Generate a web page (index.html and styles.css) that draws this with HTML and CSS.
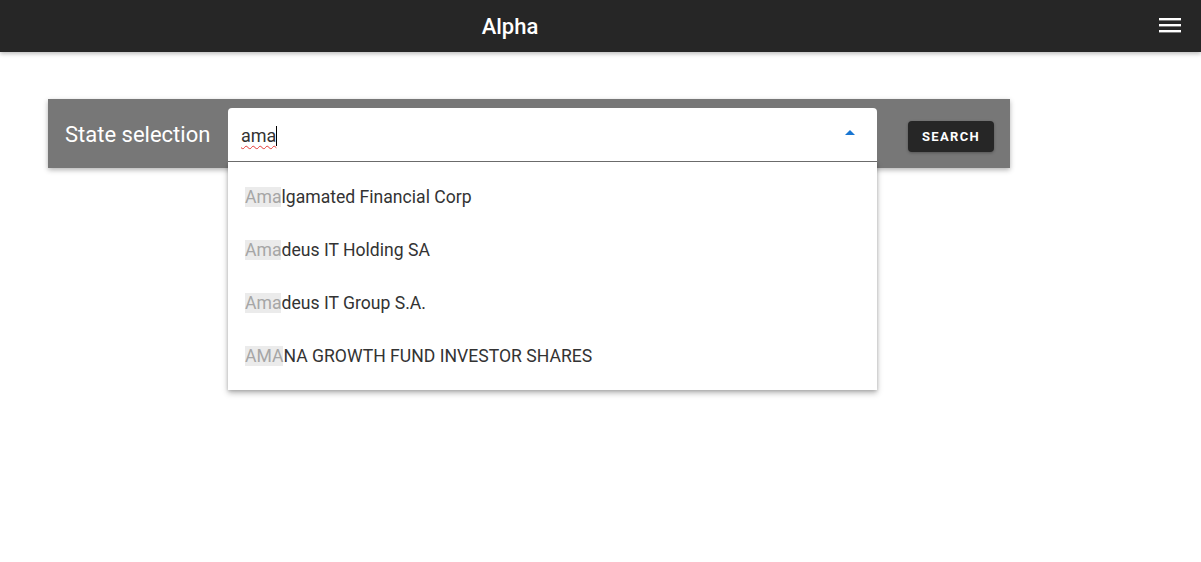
FILE: index.html
```html
<!DOCTYPE html>
<html>
<head>
<meta charset="utf-8">
<link rel="stylesheet" href="styles.css">
</head>
<body>
<header class="topbar">
  <div class="title">Alpha</div>
  <div class="menu">
    <svg width="22" height="16" viewBox="0 0 22 16"><rect x="0" y="1" width="22" height="2.4" fill="#fff"/><rect x="0" y="7" width="22" height="2.4" fill="#fff"/><rect x="0" y="13" width="22" height="2.4" fill="#fff"/></svg>
  </div>
</header>
<main class="content">
  <section class="panel">
    <div class="label">State selection</div>
    <div class="combo">
      <div class="input">
        <span class="typed">ama</span><span class="caret"></span>
        <span class="arrow"></span>
      </div>
      <ul class="list">
        <li><span class="hl">Ama</span>lgamated Financial Corp</li>
        <li><span class="hl">Ama</span>deus IT Holding SA</li>
        <li><span class="hl">Ama</span>deus IT Group S.A.</li>
        <li><span class="hl">AMA</span>NA GROWTH FUND INVESTOR SHARES</li>
      </ul>
    </div>
    <button class="search">SEARCH</button>
  </section>
</main>
</body>
</html>
```
FILE: styles.css
```css
* { box-sizing: border-box; }
html, body { margin: 0; padding: 0; background: #fff; font-family: Roboto, "Liberation Sans", sans-serif; min-height: 100%; }
body { height: 562px; }
.topbar {
  height: 52px;
  background: #262626;
  display: flex;
  align-items: center;
  box-shadow: 0 2px 4px rgba(0,0,0,0.25);
  position: relative;
  z-index: 2;
}
.title {
  width: 1020px;
  text-align: center;
  color: #fff;
  font-size: 22px;
  font-weight: 500;
}
.menu {
  margin-left: 139px;
  display: flex;
  align-items: center;
  height: 16px;
  margin-top: -2px;
}
.content { padding: 47px 0 0 48px; }
.panel {
  width: 962px;
  height: 69px;
  background: #777;
  display: flex;
  align-items: flex-start;
  box-shadow: 0 2px 5px rgba(0,0,0,0.3);
}
.label {
  color: #fff;
  font-size: 22px;
  padding: 23px 0 0 17px;
  width: 180px;
}
.combo {
  margin-top: 9px;
  width: 649px;
  flex: none;
}
.input {
  height: 54px;
  background: #fff;
  border-radius: 4px 4px 0 0;
  border-bottom: 1px solid #6b6b6b;
  display: flex;
  align-items: center;
  padding: 0 0 0 13px;
  position: relative;
  font-size: 18px;
  color: #333;
}
.typed {
  text-decoration: underline wavy #e53935;
  text-decoration-thickness: 1px;
  text-underline-offset: 3px;
  margin-top: 1px;
}
.caret {
  display: inline-block;
  width: 1px;
  height: 20px;
  background: #000;
  margin-top: 2px;
}
.arrow {
  position: absolute;
  left: 617px;
  top: 22px;
  width: 0; height: 0;
  border-left: 5px solid transparent;
  border-right: 5px solid transparent;
  border-bottom: 5px solid #1976d2;
}
.list {
  width: 649px;
  margin: 0;
  padding: 8px 0;
  list-style: none;
  background: #fff;
  box-shadow: 0 3px 6px rgba(0,0,0,0.28), 0 1px 3px rgba(0,0,0,0.15);
}
.list li {
  height: 53px;
  display: flex;
  align-items: center;
  padding-left: 17px;
  font-size: 17.6px;
  color: #333;
}
.hl {
  background: #ebebeb;
  color: #a6a6a6;
}
.search {
  margin: 22px 0 0 31px;
  width: 86px;
  height: 31px;
  border: none;
  border-radius: 4px;
  background: #262626;
  color: #fff;
  font-family: Roboto, "Liberation Sans", sans-serif;
  font-weight: 700;
  font-size: 13px;
  letter-spacing: 1.3px;
  padding: 0;
  box-shadow: 0 1px 3px rgba(0,0,0,0.3);
  flex: none;
}
```
